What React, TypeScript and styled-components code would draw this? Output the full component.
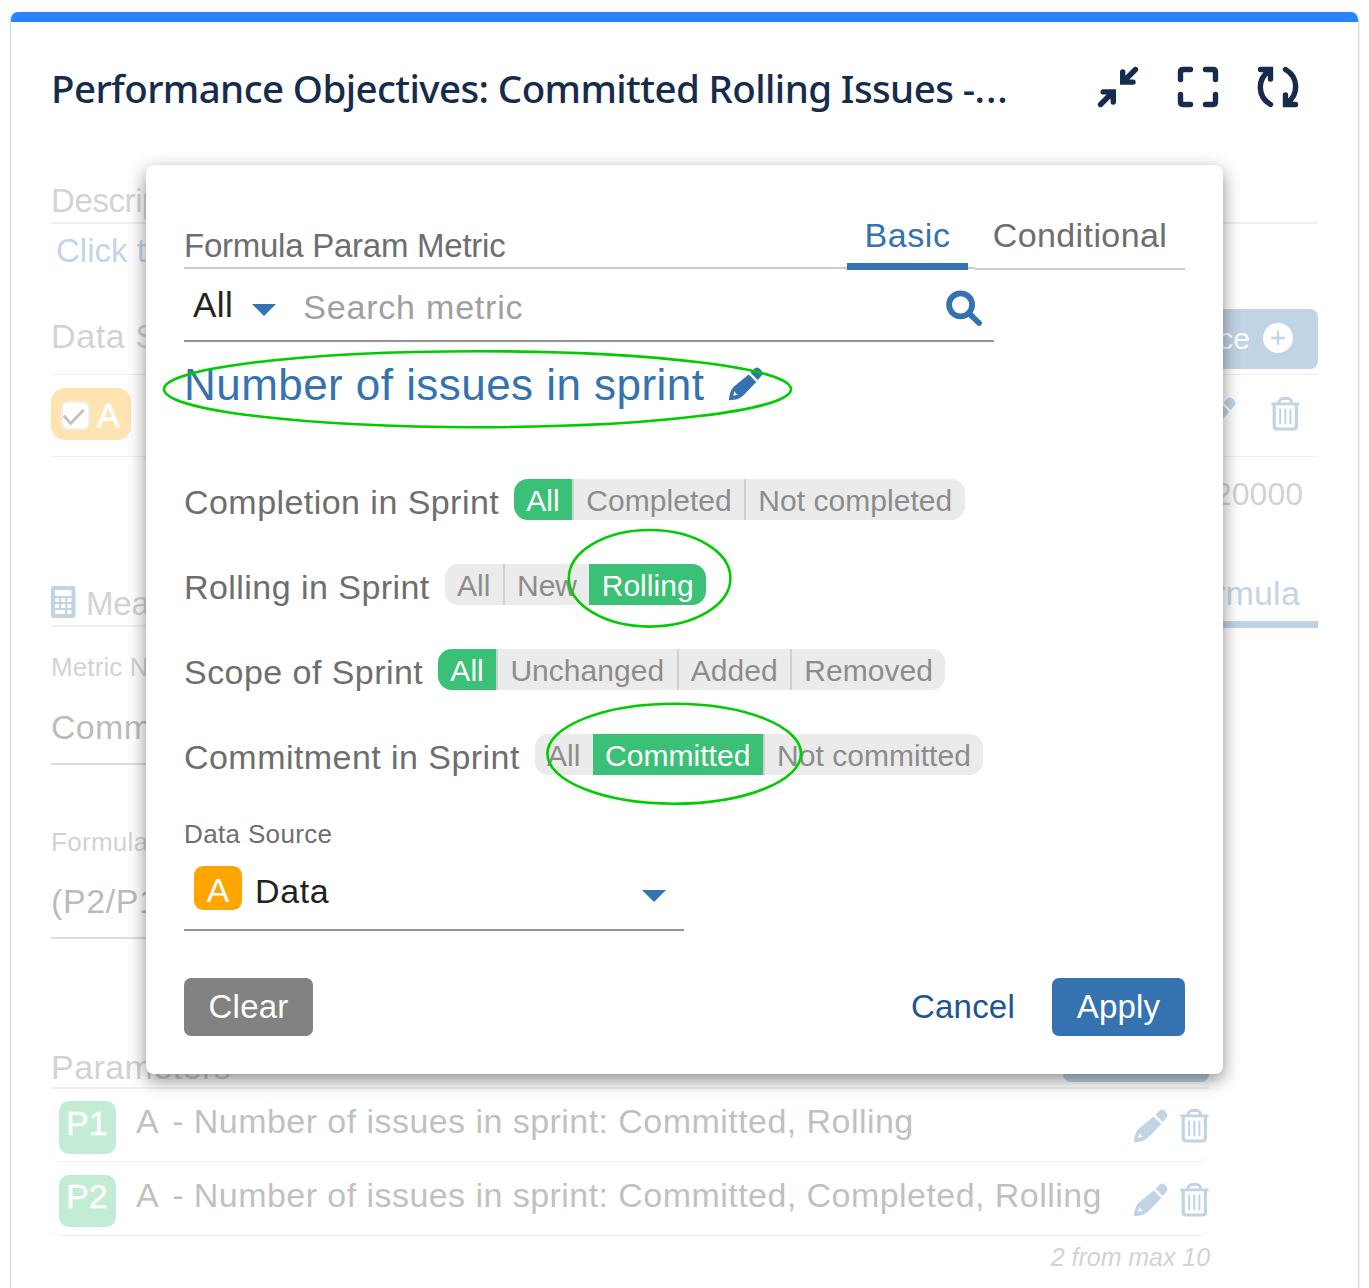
import React from "react";
import styled, { createGlobalStyle } from "styled-components";

const blue = "#3572b0";
const green = "#3bc177";
const grey = "#6e6e6e";

const GlobalStyle = createGlobalStyle`
  *, *::before, *::after { box-sizing: border-box; }
  body {
    margin: 0;
    background: #fff;
    font-family: "Liberation Sans", Arial, sans-serif;
  }
`;

const Page = styled.main`
  position: relative;
  width: 1369px;
  height: 1288px;
  padding: 12px 10px 0;
  overflow: hidden;
`;

const Card = styled.section`
  height: 1290px;
  border: 1px solid #d3d8e6;
  border-top: 0;
  border-radius: 8px 8px 0 0;
  overflow: hidden;
  box-shadow: 0 0 2px rgba(9, 30, 66, 0.15);
`;

const Accent = styled.div`
  height: 10px;
  background: #2684ff;
`;

const Header = styled.header`
  display: flex;
  justify-content: space-between;
  height: 143px;
  padding: 37px 60px 0 40px;
`;

const Title = styled.h1`
  margin: 0;
  font: 500 38.5px/59px "Noto Sans", "Open Sans", sans-serif;
  letter-spacing: -0.6px;
  color: #172b4d;
  white-space: nowrap;
`;

const Ellipsis = styled.span`
  letter-spacing: 1px;
`;

const HeaderIcons = styled.div`
  display: flex;
  gap: 40px;
  padding-top: 8px;
  color: #172b4d;
`;

const Text = styled.span<{ $size?: number; $spacing?: number; $color?: string }>`
  flex: none;
  font-size: ${(p) => p.$size ?? 34}px;
  line-height: ${(p) => ((p.$size ?? 34) < 30 ? 30 : 40)}px;
  letter-spacing: ${(p) => p.$spacing ?? 0.45}px;
  color: ${(p) => p.$color ?? grey};
  white-space: nowrap;
`;

const Body = styled.div`
  width: 1267px;
  margin-left: 40px;
  opacity: 0.3;
`;

const SectionHead = styled.div<{ $height: number; $line: number; $bottom: number; $width?: number }>`
  display: flex;
  align-items: flex-end;
  justify-content: space-between;
  width: ${(p) => (p.$width ? `${p.$width}px` : "auto")};
  height: ${(p) => p.$height}px;
  padding-bottom: ${(p) => p.$bottom}px;
  border-bottom: ${(p) => p.$line}px solid #ccc;
`;

const DescriptionLink = styled.div`
  height: 85px;
  padding: 7px 0 0 5px;
`;

const SourceHead = styled.div`
  display: flex;
  justify-content: space-between;
  height: 66px;
  border-bottom: 1px solid #ccc;
  > span { padding-top: 7px; }
`;

const AddButton = styled.div`
  display: flex;
  align-items: center;
  gap: 13px;
  height: 60px;
  padding: 0 25px;
  border-radius: 8px;
  background: ${blue};
`;

const SourceRow = styled.div`
  display: flex;
  justify-content: space-between;
  height: 82px;
  border-bottom: 1px solid #ccc;
`;

const SourceChip = styled.div`
  display: flex;
  align-items: center;
  gap: 7px;
  width: 80px;
  height: 52px;
  margin-top: 13px;
  padding: 2px 0 0 10px;
  border-radius: 14px;
  background: orange;
  -webkit-text-stroke: 0.8px #fff;
`;

const CheckBox = styled.div`
  display: flex;
  width: 29px;
  height: 29px;
  border: 2px solid #ccc;
  border-radius: 7px;
  background: #fff;
`;

const RowIcons = styled.div<{ $gap: number; $top: number; $right?: number }>`
  display: flex;
  gap: ${(p) => p.$gap}px;
  padding: ${(p) => p.$top}px ${(p) => p.$right ?? 0}px 0 0;
  color: ${blue};
`;

const Limit = styled.div`
  height: 124px;
  padding: 17px 15px 0 0;
  text-align: right;
`;

const MeasureBar = styled.div`
  display: flex;
  height: 47px;
`;

const MeasureTitle = styled.div`
  display: flex;
  flex: 1;
  gap: 11px;
  height: 46px;
  padding-top: 5px;
  border-bottom: 2px solid #ccc;
  color: ${blue};
  > span { margin-top: -2px; }
`;

const FormulaTab = styled.div`
  display: flex;
  align-items: flex-end;
  height: 47px;
  padding: 0 18px 8px;
  border-bottom: 7px solid ${blue};
`;

const Field = styled.div<{ $top: number; $gap: number }>`
  display: flex;
  flex-direction: column;
  gap: ${(p) => p.$gap}px;
  width: 1000px;
  padding: ${(p) => p.$top}px 0 16px;
  border-bottom: 2px solid #929292;
`;

const ParamButton = styled.div`
  width: 146px;
  height: 60px;
  margin-bottom: 5px;
  border-radius: 8px;
  background: ${blue};
`;

const ParamRow = styled.div<{ $height: number }>`
  display: flex;
  width: 1158px;
  height: ${(p) => p.$height}px;
  padding: ${(p) => p.$height - 61}px 0 0 8px;
  border-bottom: 1px solid #ccc;
  border-radius: 0 0 9px 9px;
`;

const ParamChip = styled.div<{ $tall: boolean }>`
  width: 57px;
  height: ${(p) => (p.$tall ? 53 : 52)}px;
  margin-right: 20px;
  padding: ${(p) => (p.$tall ? 2 : 1)}px 0 0 7px;
  border-radius: 10px;
  background: ${green};
  -webkit-text-stroke: 0.4px #fff;
`;

const ParamName = styled.div`
  display: flex;
  flex: 1;
  gap: 13px;
`;

const ParamCount = styled.div`
  width: 1159px;
  padding-top: 6px;
  text-align: right;
  font-style: italic;
`;

const Modal = styled.div`
  position: absolute;
  left: 146px;
  top: 165px;
  width: 1077px;
  height: 909px;
  padding: 0 38px;
  border-radius: 8px;
  background: #fff;
  box-shadow: 0 6px 18px rgba(0, 0, 0, 0.45);
`;

const ModalHead = styled.div`
  display: flex;
  height: 105px;
`;

const ModalTitle = styled.div`
  display: flex;
  flex: 1;
  align-items: flex-end;
  height: 104px;
  padding-bottom: 1px;
  border-bottom: 2px solid #ccc;
`;

const TabGap = styled.div`
  width: 7px;
  height: 104px;
  border-bottom: 2px solid #ccc;
`;

const Tab = styled.div<{ $active?: boolean; $width: number }>`
  display: flex;
  align-items: flex-end;
  justify-content: center;
  width: ${(p) => p.$width}px;
  padding-bottom: ${(p) => (p.$active ? 8 : 13)}px;
  border-bottom: ${(p) => (p.$active ? `7px solid ${blue}` : "2px solid #ccc")};
`;

const SearchRow = styled.div`
  display: flex;
  align-items: flex-start;
  width: 810px;
  height: 72px;
  padding: 15px 12px 0 9px;
  border-bottom: 2px solid #929292;
  color: ${blue};
`;

const SearchInput = styled.div`
  flex: 1;
  padding: 2px 0 0 27px;
`;

const Caret = styled.i<{ $top: number; $left: number }>`
  width: 0;
  height: 0;
  margin: ${(p) => p.$top}px 0 0 ${(p) => p.$left}px;
  border: 12.5px solid transparent;
  border-top-color: ${blue};
  border-bottom-width: 0;
`;

const SearchIconBox = styled.div`
  padding-top: 5px;
`;

const MetricName = styled.div`
  display: flex;
  gap: 25px;
  height: 137px;
  padding-top: 23px;
  color: ${blue};
`;

const PencilBox = styled.div`
  padding-top: 2px;
`;

const Filters = styled.div`
  display: flex;
  flex-direction: column;
  gap: 44px;
`;

const FilterRow = styled.div`
  display: flex;
  gap: 14.8px;
  height: 41px;
  > span { padding-top: 3px; }
`;

const Segments = styled.div`
  display: flex;
  height: 41px;
  border-radius: 14px;
  overflow: hidden;
  background: #ebebeb;
`;

const Segment = styled.div<{ $active: boolean; $divider: boolean }>`
  padding: 0 12.3px;
  border-right: ${(p) => (p.$divider ? "2px solid #d0d0d0" : "0")};
  background: ${(p) => (p.$active ? green : "#ebebeb")};
  color: ${(p) => (p.$active ? "#fff" : "#8c8c8c")};
  font-size: 30px;
  line-height: 43px;
  letter-spacing: 0.04px;
  white-space: nowrap;
`;

const SourceField = styled.div`
  width: 500px;
  height: 156px;
  padding-top: 44px;
  border-bottom: 2px solid #929292;
`;

const SourceValue = styled.div`
  display: flex;
  padding: 17px 18px 0 10px;
  > span { padding-top: 5px; margin-left: 13px; }
`;

const LetterChip = styled.div`
  width: 48px;
  height: 44px;
  border-radius: 9px;
  background: orange;
  color: #fff;
  font-size: 34px;
  line-height: 49px;
  text-align: center;
`;

const Spacer = styled.div`
  flex: 1;
`;

const Actions = styled.div`
  display: flex;
  margin-top: 47px;
`;

const Button = styled.button<{ $bg: string; $fg: string; $width: number }>`
  width: ${(p) => p.$width}px;
  height: 58px;
  padding: 0;
  border: 0;
  border-radius: 7px;
  background: ${(p) => p.$bg};
  color: ${(p) => p.$fg};
  font: 33px/56px "Liberation Sans", Arial, sans-serif;
  letter-spacing: 0.2px;
`;

const Annotations = styled.svg`
  position: absolute;
  left: 0;
  top: 0;
  fill: none;
  stroke: #00cc00;
  stroke-width: 2.6px;
`;

const Svg = styled.svg`
  display: block;
  flex: none;
  overflow: visible;
`;

const CollapseIcon = () => (
  <Svg width="40" height="40" fill="none" stroke="currentColor" strokeWidth="5.4" strokeLinecap="round">
    <path d="M37.5 2.5 25 15M24.7 5V15.1H35M2.5 37.5 15 25M5.2 24.9H15.3V35" />
  </Svg>
);

const FullscreenIcon = () => (
  <Svg width="40" height="40" fill="none" stroke="currentColor" strokeWidth="5.4" strokeLinecap="round">
    <path d="M2.5 12.5V5Q2.5 2.5 5 2.5H12.5M27.5 2.5H35Q37.5 2.5 37.5 5V12.5M37.5 27.5V35Q37.5 37.5 35 37.5H27.5M12.5 37.5H5Q2.5 37.5 2.5 35V27.5" />
  </Svg>
);

const RefreshIcon = () => (
  <Svg width="40" height="40" fill="none" stroke="currentColor" strokeWidth="5.4" strokeLinecap="round">
    <path d="M2.5 2.5H12.5V12M12.5 37.5C-.8 30-.8 12 11 4M37.5 37.5H27.5V28M27.5 2.5C40.8 10 40.8 28 29 36" />
  </Svg>
);

const PencilIcon = () => (
  <Svg width="34" height="34" fill="currentColor">
    <path
      fillRule="evenodd"
      d="M19.7 7.6 27.3 15.1 14.5 28.2C11 31.4 7 33 .3 33.2Q-.2 33.2 0 32.6C.3 27 2 22.5 5 19.5ZM5.4 24 4.2 28.8 9.4 27.6 6.8 26.5Z"
    />
    <path d="M21.6 5.7 25.2 2Q28-.9 31 2.1 35 6 32.6 8.6L28.8 12.9Z" />
  </Svg>
);

const TrashIcon = () => (
  <Svg width="29" height="34" fill="none" stroke="currentColor">
    <path strokeWidth="3.2" d="M3.2 7V29Q3.2 32 6.2 32H22.4Q25.4 32 25.4 29V7" />
    <path strokeWidth="2.7" strokeLinecap="round" d="M1.4 6.8H27.4" />
    <path strokeWidth="3" d="M7.6 5.6C9.3 2 10 1.5 12 1.5H16.6C18.6 1.5 19.3 2 21 5.6" />
    <path strokeWidth="2" strokeLinecap="round" d="M9.2 12.5V26.5M14.3 12.5V26.5M19.4 12.5V26.5" />
  </Svg>
);

const SearchIcon = () => (
  <Svg width="36" height="36" fill="none" stroke="currentColor">
    <circle cx="14.6" cy="14.8" r="11.5" strokeWidth="5.8" />
    <path d="M24 24.2 33 33" strokeWidth="5.8" strokeLinecap="round" />
  </Svg>
);

const CalculatorIcon = () => (
  <Svg width="24" height="32" fill="currentColor">
    <path
      fillRule="evenodd"
      d="M2.5 0H22Q24.5 0 24.5 2.5V29.5Q24.5 32 22 32H2.5Q0 32 0 29.5V2.5Q0 0 2.5 0ZM4 4V10H20.5V4ZM4 12V16H8V12ZM10.2 12V16H14.2V12ZM16.4 12V16H20.4V12ZM4 18V22H8V18ZM10.2 18V22H14.2V18ZM16.4 18V22H20.4V18ZM4 24V28H14.2V24ZM16.4 24V28H20.4V24Z"
    />
  </Svg>
);

const PlusIcon = () => (
  <Svg width="30" height="32">
    <circle cx="15" cy="15" r="15" fill="#fff" />
    <path d="M15 9.2V20.8M9.2 15H20.8" stroke={blue} strokeWidth="2.4" strokeLinecap="round" />
  </Svg>
);

const CheckIcon = () => (
  <Svg width="25" height="25" fill="none" stroke="#333" strokeWidth="2.8">
    <path d="M.8 12.8 7.6 20.4 20.6 7" />
  </Svg>
);

const filters = [
  { label: "Completion in Sprint", options: ["All", "Completed", "Not completed"], active: 0 },
  { label: "Rolling in Sprint", options: ["All", "New", "Rolling"], active: 2 },
  { label: "Scope of Sprint", options: ["All", "Unchanged", "Added", "Removed"], active: 0 },
  { label: "Commitment in Sprint", options: ["All", "Committed", "Not committed"], active: 1 },
];

const params = [
  { id: "P1", name: "- Number of issues in sprint: Committed, Rolling", height: 73 },
  { id: "P2", name: "- Number of issues in sprint: Committed, Completed, Rolling", height: 74 },
];

const FormulaModal = () => (
  <Modal role="dialog">
    <ModalHead>
      <ModalTitle>
        <Text $size={33} $spacing={-0.25}>Formula Param Metric</Text>
      </ModalTitle>
      <Tab $active $width={121}>
        <Text $spacing={0.6} $color={blue}>Basic</Text>
      </Tab>
      <TabGap />
      <Tab $width={210}>
        <Text $spacing={0.4}>Conditional</Text>
      </Tab>
    </ModalHead>
    <SearchRow>
      <Text $size={35} $color="#222">All</Text>
      <Caret $top={19} $left={19} />
      <SearchInput>
        <Text $spacing={0.8} $color="#a0a0a0">Search metric</Text>
      </SearchInput>
      <SearchIconBox>
        <SearchIcon />
      </SearchIconBox>
    </SearchRow>
    <MetricName>
      <Text $size={44} $color={blue}>Number of issues in sprint</Text>
      <PencilBox>
        <PencilIcon />
      </PencilBox>
    </MetricName>
    <Filters>
      {filters.map((f) => (
        <FilterRow key={f.label}>
          <Text>{f.label}</Text>
          <Segments>
            {f.options.map((o, i) => (
              <Segment
                key={o}
                $active={i === f.active}
                $divider={i < f.options.length - 1 && i + 1 !== f.active}
              >
                {o}
              </Segment>
            ))}
          </Segments>
        </FilterRow>
      ))}
    </Filters>
    <SourceField>
      <Text $size={26} $spacing={0.35}>Data Source</Text>
      <SourceValue>
        <LetterChip>A</LetterChip>
        <Text $spacing={0.6} $color="#222">Data</Text>
        <Spacer />
        <Caret $top={24} $left={0} />
      </SourceValue>
    </SourceField>
    <Actions>
      <Button $bg="#828282" $fg="#fff" $width={129}>Clear</Button>
      <Spacer />
      <Button $bg="#fff" $fg="#205591" $width={178}>Cancel</Button>
      <Button $bg={blue} $fg="#fff" $width={133}>Apply</Button>
    </Actions>
  </Modal>
);

export default function App() {
  return (
    <Page>
      <GlobalStyle />
      <Card>
        <Accent />
        <Header>
          <Title>
            Performance Objectives: Committed Rolling Issues -<Ellipsis>...</Ellipsis>
          </Title>
          <HeaderIcons>
            <CollapseIcon />
            <FullscreenIcon />
            <RefreshIcon />
          </HeaderIcons>
        </Header>
        <Body>
          <SectionHead $height={59} $line={2} $bottom={1}>
            <Text $size={33} $spacing={-0.4}>Descrip</Text>
          </SectionHead>
          <DescriptionLink>
            <Text $size={33} $spacing={0} $color={blue}>Click to</Text>
          </DescriptionLink>
          <SourceHead>
            <Text $spacing={0.6}>Data Set</Text>
            <AddButton>
              <Text $size={30} $spacing={0} $color="#fff">Source</Text>
              <PlusIcon />
            </AddButton>
          </SourceHead>
          <SourceRow>
            <SourceChip>
              <CheckBox>
                <CheckIcon />
              </CheckBox>
              <Text $color="#fff">A</Text>
            </SourceChip>
            <RowIcons $gap={35} $top={22} $right={18}>
              <PencilIcon />
              <TrashIcon />
            </RowIcons>
          </SourceRow>
          <Limit>
            <Text $size={32} $spacing={0}>20000</Text>
          </Limit>
          <MeasureBar>
            <MeasureTitle>
              <CalculatorIcon />
              <Text $size={33} $spacing={-0.2}>Meas.</Text>
            </MeasureTitle>
            <FormulaTab>
              <Text $spacing={0.2} $color={blue}>Formula</Text>
            </FormulaTab>
          </MeasureBar>
          <Field $top={24} $gap={25}>
            <Text $size={26} $spacing={0.1}>Metric Na</Text>
            <Text $spacing={0.3} $color="#222">Comm.</Text>
          </Field>
          <Field $top={62} $gap={24}>
            <Text $size={26} $spacing={0.3}>Formula</Text>
            <Text $spacing={0.6} $color="#222">(P2/P1)</Text>
          </Field>
          <SectionHead $height={150} $line={2} $bottom={0} $width={1158}>
            <Text>Parameters</Text>
            <ParamButton />
          </SectionHead>
          {params.map((p, i) => (
            <ParamRow key={p.id} $height={p.height}>
              <ParamChip $tall={i === 0}>
                <Text $spacing={0} $color="#fff">{p.id}</Text>
              </ParamChip>
              <ParamName>
                <Text $color="#333">A</Text>
                <Text $color="#333">{p.name}</Text>
              </ParamName>
              <RowIcons $gap={12} $top={8}>
                <PencilIcon />
                <TrashIcon />
              </RowIcons>
            </ParamRow>
          ))}
          <ParamCount>
            <Text $size={25} $spacing={-0.05}>2 from max 10</Text>
          </ParamCount>
        </Body>
      </Card>
      <FormulaModal />
      <Annotations width="1369" height="1288">
        <ellipse cx="477.5" cy="389.2" rx="313.5" ry="38" />
        <ellipse cx="649.6" cy="578.3" rx="80.8" ry="48.3" />
        <ellipse cx="674.2" cy="753.7" rx="126.8" ry="50" />
      </Annotations>
    </Page>
  );
}
